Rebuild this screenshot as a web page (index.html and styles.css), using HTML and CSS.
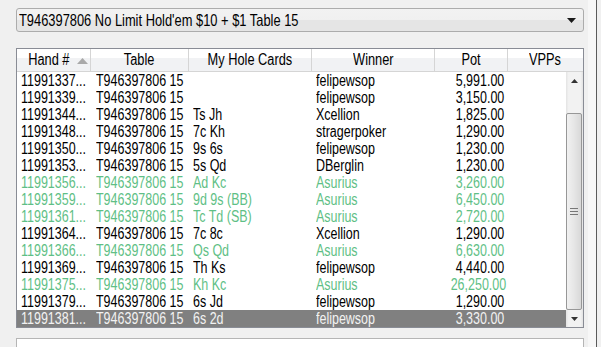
FILE: index.html
```html
<!DOCTYPE html>
<html>
<head>
<meta charset="utf-8">
<link rel="stylesheet" href="styles.css">
</head>
<body>
<div class="window">
  <div class="main">
    <div class="combo">
      <span class="combo-text"><span class="n">T946397806 No Limit Hold'em $10 + $1 Table 15</span></span>
      <svg class="combo-arrow" width="9" height="5" viewBox="0 0 9 5"><path d="M0 0H9L4.5 5Z" fill="#1a1a1a"/></svg>
    </div>
    <div class="list">
      <div class="header">
        <div class="hcell c1"><span class="n">Hand #</span><svg class="sort" width="11" height="6" viewBox="0 0 11 6"><path d="M0 6L5.5 0L11 6Z" fill="#a9a9a9"/></svg></div>
        <div class="hcell c2"><span class="n">Table</span></div>
        <div class="hcell c3"><span class="n">My Hole Cards</span></div>
        <div class="hcell c4"><span class="n">Winner</span></div>
        <div class="hcell c5"><span class="n">Pot</span></div>
        <div class="hcell c6 last"><span class="n">VPPs</span></div>
      </div>
      <div class="body">
        <div class="rows">
          <div class="row"><span class="c1"><span class="n">11991337...</span></span><span class="c2"><span class="n">T946397806 15</span></span><span class="c3"></span><span class="c4"><span class="n">felipewsop</span></span><span class="c5"><span class="n">5,991.00</span></span></div>
          <div class="row"><span class="c1"><span class="n">11991339...</span></span><span class="c2"><span class="n">T946397806 15</span></span><span class="c3"></span><span class="c4"><span class="n">felipewsop</span></span><span class="c5"><span class="n">3,150.00</span></span></div>
          <div class="row"><span class="c1"><span class="n">11991344...</span></span><span class="c2"><span class="n">T946397806 15</span></span><span class="c3"><span class="n">Ts Jh</span></span><span class="c4"><span class="n">Xcellion</span></span><span class="c5"><span class="n">1,825.00</span></span></div>
          <div class="row"><span class="c1"><span class="n">11991348...</span></span><span class="c2"><span class="n">T946397806 15</span></span><span class="c3"><span class="n">7c Kh</span></span><span class="c4"><span class="n">stragerpoker</span></span><span class="c5"><span class="n">1,290.00</span></span></div>
          <div class="row"><span class="c1"><span class="n">11991350...</span></span><span class="c2"><span class="n">T946397806 15</span></span><span class="c3"><span class="n">9s 6s</span></span><span class="c4"><span class="n">felipewsop</span></span><span class="c5"><span class="n">1,230.00</span></span></div>
          <div class="row"><span class="c1"><span class="n">11991353...</span></span><span class="c2"><span class="n">T946397806 15</span></span><span class="c3"><span class="n">5s Qd</span></span><span class="c4"><span class="n">DBerglin</span></span><span class="c5"><span class="n">1,230.00</span></span></div>
          <div class="row won"><span class="c1"><span class="n">11991356...</span></span><span class="c2"><span class="n">T946397806 15</span></span><span class="c3"><span class="n">Ad Kc</span></span><span class="c4"><span class="n">Asurius</span></span><span class="c5"><span class="n">3,260.00</span></span></div>
          <div class="row won"><span class="c1"><span class="n">11991359...</span></span><span class="c2"><span class="n">T946397806 15</span></span><span class="c3"><span class="n">9d 9s (BB)</span></span><span class="c4"><span class="n">Asurius</span></span><span class="c5"><span class="n">6,450.00</span></span></div>
          <div class="row won"><span class="c1"><span class="n">11991361...</span></span><span class="c2"><span class="n">T946397806 15</span></span><span class="c3"><span class="n">Tc Td (SB)</span></span><span class="c4"><span class="n">Asurius</span></span><span class="c5"><span class="n">2,720.00</span></span></div>
          <div class="row"><span class="c1"><span class="n">11991364...</span></span><span class="c2"><span class="n">T946397806 15</span></span><span class="c3"><span class="n">7c 8c</span></span><span class="c4"><span class="n">Xcellion</span></span><span class="c5"><span class="n">1,290.00</span></span></div>
          <div class="row won"><span class="c1"><span class="n">11991366...</span></span><span class="c2"><span class="n">T946397806 15</span></span><span class="c3"><span class="n">Qs Qd</span></span><span class="c4"><span class="n">Asurius</span></span><span class="c5"><span class="n">6,630.00</span></span></div>
          <div class="row"><span class="c1"><span class="n">11991369...</span></span><span class="c2"><span class="n">T946397806 15</span></span><span class="c3"><span class="n">Th Ks</span></span><span class="c4"><span class="n">felipewsop</span></span><span class="c5"><span class="n">4,440.00</span></span></div>
          <div class="row won"><span class="c1"><span class="n">11991375...</span></span><span class="c2"><span class="n">T946397806 15</span></span><span class="c3"><span class="n">Kh Kc</span></span><span class="c4"><span class="n">Asurius</span></span><span class="c5"><span class="n">26,250.00</span></span></div>
          <div class="row"><span class="c1"><span class="n">11991379...</span></span><span class="c2"><span class="n">T946397806 15</span></span><span class="c3"><span class="n">6s Jd</span></span><span class="c4"><span class="n">felipewsop</span></span><span class="c5"><span class="n">1,290.00</span></span></div>
          <div class="row selected"><span class="c1"><span class="n">11991381...</span></span><span class="c2"><span class="n">T946397806 15</span></span><span class="c3"><span class="n">6s 2d</span></span><span class="c4"><span class="n">felipewsop</span></span><span class="c5"><span class="n">3,330.00</span></span></div>
        </div>
        <div class="vscroll">
          <div class="sbtn"><svg width="7" height="4" viewBox="0 0 7 4"><path d="M0 4L3.5 0L7 4Z" fill="#333"/></svg></div>
          <div class="track">
            <div class="thumb"><svg width="8" height="7" viewBox="0 0 8 7"><path d="M0 0.5H8M0 3.5H8M0 6.5H8" stroke="#777" stroke-width="1"/></svg></div>
          </div>
          <div class="sbtn"><svg width="7" height="4" viewBox="0 0 7 4"><path d="M0 0H7L3.5 4Z" fill="#333"/></svg></div>
        </div>
      </div>
    </div>
    <div class="lower"></div>
  </div>
  <div class="edge"></div>
</div>
</body>
</html>
```

FILE: styles.css
```css
html, body {
  margin: 0;
  padding: 0;
  background: #f0f0f0;
  overflow: hidden;
}
.window {
  display: flex;
  width: 601px;
  height: 347px;
  font-family: "Liberation Sans", Arial, sans-serif;
  font-size: 16px;
  color: #000;
}
.n {
  display: inline-block;
  white-space: nowrap;
  transform: scaleX(0.78);
  transform-origin: left center;
}
.main {
  width: 568px;
  padding-left: 16px;
  padding-top: 8px;
  display: flex;
  flex-direction: column;
}
.combo {
  height: 22px;
  border: 1px solid #acacac;
  border-radius: 3px;
  background: linear-gradient(#f2f2f2, #f0f0f0 50%, #e5e5e5 51%, #e5e5e5);
  display: flex;
  align-items: center;
  justify-content: space-between;
  padding: 0 7px 0 2px;
  font-size: 16.5px;
}
.combo-text {
  line-height: 22px;
  width: 300px;
  white-space: nowrap;
}
.combo-text .n {
  transform: scaleX(0.78);
}
.list {
  margin-top: 16px;
  border: 1px solid #898c95;
  background: #fff;
  height: 281px;
  display: flex;
  flex-direction: column;
}
.header {
  display: flex;
  height: 22px;
  border-bottom: 1px solid #d5d5d5;
  background: linear-gradient(#ffffff, #ffffff 40%, #f1f2f4 41%, #f1f2f4);
}
.hcell {
  box-sizing: border-box;
  border-right: 1px solid #d5d5d5;
  display: flex;
  align-items: center;
  justify-content: center;
  line-height: 22px;
  overflow: hidden;
}
.hcell .n {
  transform: scaleX(0.8);
  transform-origin: center center;
}
.hcell.last { border-right: none; }
.c1 { width: 74px; }
.c2 { width: 98px; }
.c3 { width: 123px; }
.c4 { width: 123px; }
.c5 { width: 73px; }
.c6 { width: 75px; }
.hcell.c1 { padding-left: 4px; }
.hcell.c1 .n { margin-right: -2px; }
.sort { margin-top: 1px; margin-left: 4px; flex: none; }
.body {
  display: flex;
  flex: 1;
}
.rows {
  width: 549px;
}
.row {
  display: flex;
  height: 17px;
  line-height: 17px;
  white-space: nowrap;
}
.row > span {
  box-sizing: border-box;
  overflow: hidden;
  padding-left: 4px;
  flex: none;
}
.row .c2 { padding-left: 5px; }
.row .c5 {
  text-align: right;
  padding-left: 0;
  padding-right: 4px;
}
.row .c5 .n { transform-origin: right center; }
.row.won { color: #5fbf86; }
.row.selected {
  background: #808080;
  color: #f2f2f2;
}
.vscroll {
  width: 17px;
  display: flex;
  flex-direction: column;
  background: linear-gradient(90deg, #e3e3e3, #f2f2f2 15%, #f2f2f2 85%, #e3e3e3);
}
.sbtn {
  height: 17px;
  display: flex;
  align-items: center;
  justify-content: center;
  flex: none;
}
.track {
  flex: 1;
  display: flex;
  flex-direction: column;
  justify-content: flex-end;
}
.thumb {
  box-sizing: border-box;
  height: 197px;
  margin: 0 1px 0 0;
  border: 1px solid #979797;
  border-radius: 2px;
  background: linear-gradient(90deg, #f1f1f1, #e6e6e6 50%, #d8d8d8);
  display: flex;
  align-items: center;
  justify-content: center;
}
.lower {
  margin-top: 10px;
  height: 20px;
  border: 1px solid #b5b5b5;
  border-bottom: none;
  background: #fff;
}
.edge {
  margin-left: 4px;
  width: 8px;
  background: #f7f7f7;
  border-right: 1px solid #5a5a5a;
}
```
